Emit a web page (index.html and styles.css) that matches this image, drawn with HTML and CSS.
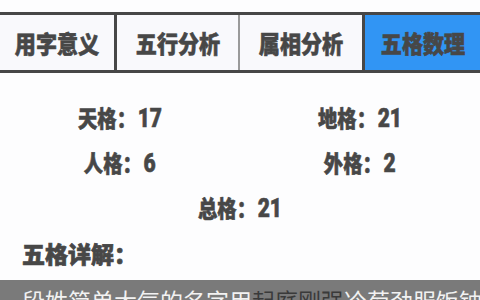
FILE: index.html
```html
<!DOCTYPE html>
<html lang="zh">
<head>
<meta charset="utf-8">
<link rel="stylesheet" href="styles.css">
</head>
<body>
<div class="tabs">
  <div class="tab t1"><span class="tl">用字意义</span></div>
  <div class="tab t2"><span class="tl">五行分析</span></div>
  <div class="tab t3"><span class="tl">属相分析</span></div>
  <div class="tab t4 active"><span class="tl">五格数理</span></div>
</div>
<div class="grid">
  <div class="cell"><span class="v">天格：<span class="n">17</span></span></div>
  <div class="cell"><span class="v">地格：<span class="n">21</span></span></div>
  <div class="cell"><span class="v">人格：<span class="n">6</span></span></div>
  <div class="cell"><span class="v">外格：<span class="n">2</span></span></div>
  <div class="cell full"><span class="v">总格：<span class="n">21</span></span></div>
</div>
<div class="title">五格详解：</div>
<div class="bar"><p class="btext">段姓简单大气的名字用<span class="dk">起庭刚强</span>冷菊劲服饭铀</p></div>
</body>
</html>
```
FILE: styles.css
```css
html, body {
  margin: 0;
  padding: 0;
  background: #fdfdfe;
  overflow: hidden;
  width: 480px;
  height: 300px;
}
body {
  font-family: "Noto Sans CJK SC", "Noto Sans", sans-serif;
  color: #474747;
}
.tabs {
  margin-top: 12px;
  display: flex;
  height: 55px;
  border-top: 3px solid #474747;
  border-bottom: 3px solid #474747;
  background: #f9f9fc;
}
.tab {
  display: flex;
  align-items: center;
  justify-content: center;
}
.t1 { width: 114px; }
.t2 { width: 121px; border-left: 3px solid #474747; }
.t3 { width: 122px; border-left: 2px solid #9a9a9a; }
.t4 { flex: 1; border-left: 3px solid #474747; }
.active { background: #3195f4; }
.tl {
  display: inline-block;
  font-size: 24px;
  font-weight: 900;
  line-height: 1;
  transform: scaleX(0.88);
  -webkit-text-stroke: 0.6px #474747;
}
.grid {
  padding-top: 23px;
  display: grid;
  grid-template-columns: 1fr 1fr;
  grid-auto-rows: 45px;
}
.cell {
  display: flex;
  align-items: center;
  justify-content: center;
}
.full { grid-column: 1 / 3; }
.v {
  display: inline-block;
  font-size: 23px;
  font-weight: 900;
  line-height: 1;
  transform: scaleX(0.84);
  font-family: "Roboto", "Noto Sans CJK SC", sans-serif;
  -webkit-text-stroke: 0.6px #474747;
}
.n {
  font-size: 25px;
  margin-left: 2px;
}
.title {
  height: 44px;
  line-height: 44px;
  padding-left: 22px;
  font-size: 23px;
  font-weight: 900;
  margin-bottom: 5px;
  -webkit-text-stroke: 0.7px #474747;
}
.bar {
  background: #7a7a7a;
  height: 20px;
  overflow: hidden;
  padding-top: 6px;
  box-sizing: border-box;
}
.btext {
  margin: 0;
  padding-left: 22px;
  font-size: 23px;
  line-height: 28px;
  color: #f2f2f2;
  white-space: nowrap;
}
.dk { color: #3a3a3a; }
```
